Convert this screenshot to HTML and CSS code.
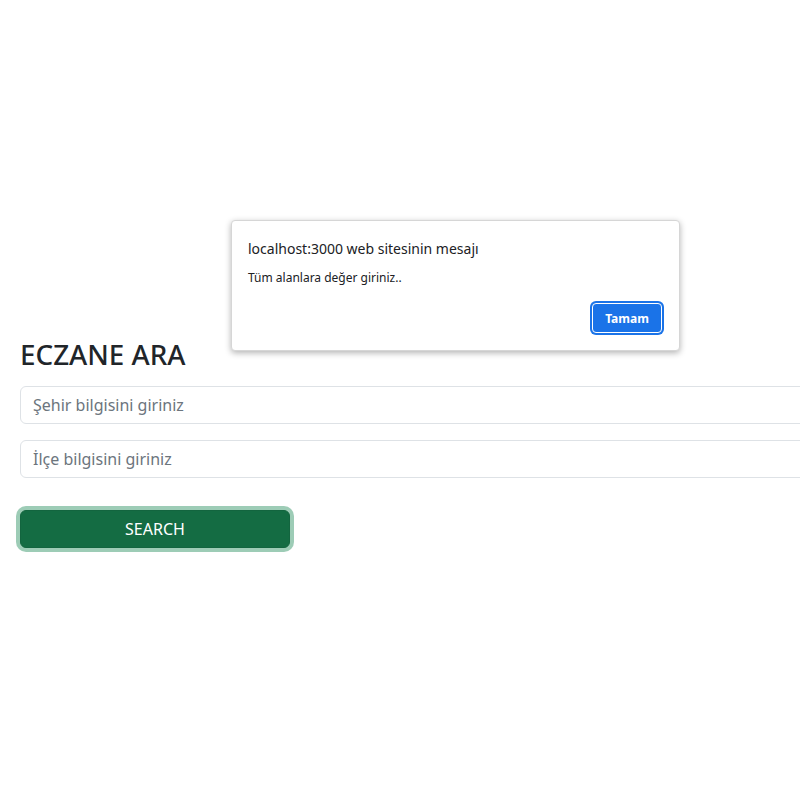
FILE: index.html
```html
<!DOCTYPE html>
<html lang="tr">
<head>
<meta charset="utf-8">
<title>Eczane Ara</title>
<link rel="stylesheet" href="styles.css">
</head>
<body>
<main class="page">
  <h2 class="title">ECZANE ARA</h2>
  <form class="search-form">
    <input class="field" type="text" placeholder="Şehir bilgisini giriniz">
    <input class="field" type="text" placeholder="İlçe bilgisini giriniz">
    <button class="btn-search" type="button">SEARCH</button>
  </form>
</main>
<div class="dialog">
  <div class="dialog-title">localhost:3000 web sitesinin mesajı</div>
  <div class="dialog-msg">Tüm alanlara değer giriniz..</div>
  <div class="dialog-actions">
    <button class="dialog-btn" type="button">Tamam</button>
  </div>
</div>
</body>
</html>
```

FILE: styles.css
```css
html, body {
  margin: 0;
  padding: 0;
  overflow: hidden;
  background: #fff;
}
body {
  font-family: "Noto Sans", "Open Sans", sans-serif;
  color: #212529;
  width: 800px;
  height: 800px;
  position: relative;
}
.page {
  padding: 338px 0 0 20px;
  overflow: hidden;
}
.title {
  margin: 0 0 15px 0;
  font-size: 27.8px;
  font-weight: 500;
  line-height: 1.2;
}
.search-form {
  display: flex;
  flex-direction: column;
  align-items: flex-start;
  overflow: hidden;
  padding: 0 0 6px 0;
  margin-left: -6px;
  padding-left: 6px;
}
.field {
  width: 900px;
  height: 38px;
  box-sizing: border-box;
  border: 1px solid #dee2e6;
  border-radius: 6px;
  padding: 6px 12px;
  font-family: inherit;
  font-size: 16px;
  margin-bottom: 16px;
  color: #212529;
  outline: none;
}
.field::placeholder {
  color: #6c757d;
}
.btn-search {
  margin-top: 16px;
  width: 270px;
  height: 38px;
  background: #146c43;
  color: #fff;
  border: 1px solid #13653f;
  border-radius: 6px;
  font-family: inherit;
  font-size: 16px;
  box-shadow: 0 0 0 4px rgba(60, 153, 110, 0.5);
}
.dialog {
  position: absolute;
  left: 231px;
  top: 220px;
  width: 449px;
  height: 131px;
  box-sizing: border-box;
  background: #fff;
  border: 1px solid #d6d6d6;
  border-radius: 4px;
  box-shadow: 0 2px 6px rgba(0, 0, 0, 0.3);
  padding: 18px 16px 0 16px;
  font-family: "Noto Sans", "Open Sans", sans-serif;
}
.dialog-title {
  font-size: 14px;
  color: #202124;
  line-height: 20px;
}
.dialog-msg {
  margin-top: 11px;
  font-size: 12px;
  color: #202124;
  line-height: 16px;
}
.dialog-actions {
  display: flex;
  justify-content: flex-end;
  margin-top: 17px;
}
.dialog-btn {
  width: 70px;
  height: 30px;
  background: #1a73e8;
  color: #fff;
  border: 1px solid #fff;
  border-radius: 4px;
  font-family: inherit;
  font-size: 12px;
  font-weight: 700;
  box-shadow: 0 0 0 2px #1a73e8;
  margin-right: 1px;
}
```
